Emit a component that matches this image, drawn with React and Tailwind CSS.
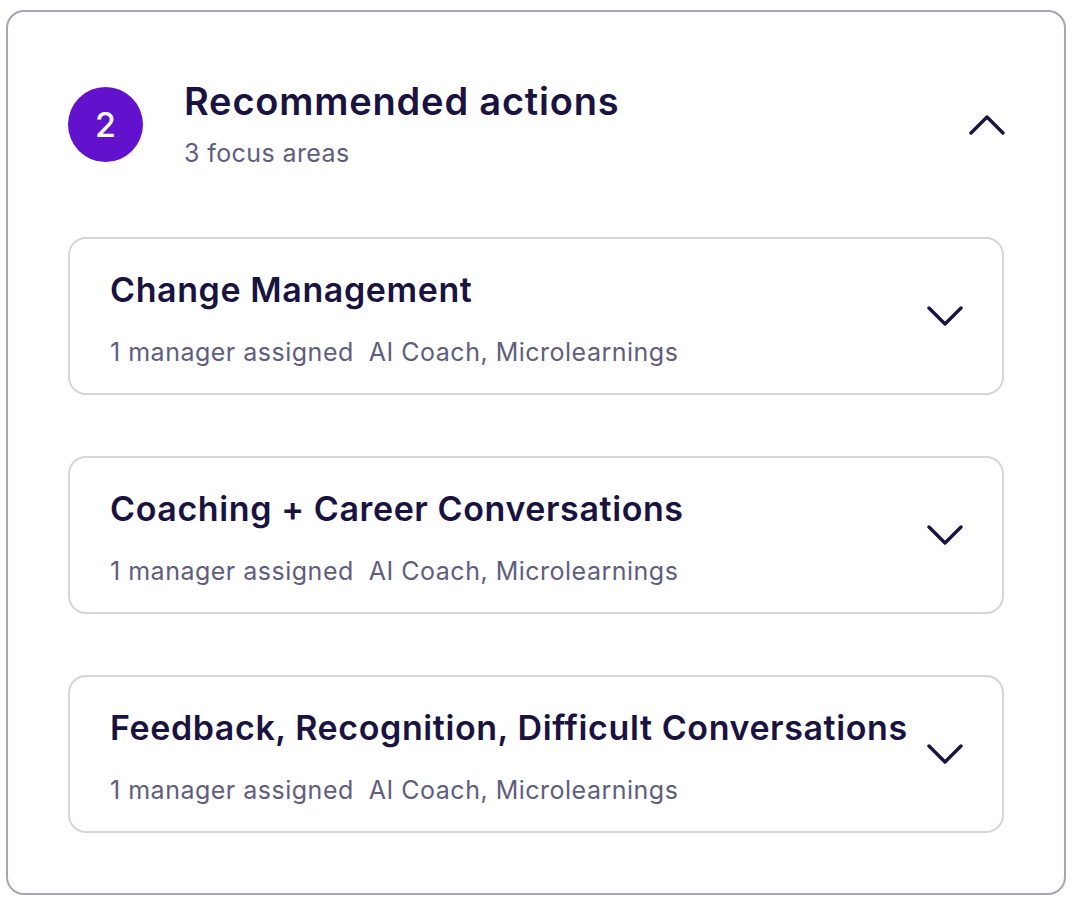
const areas = [
  { name: "Change Management", managers: "1 manager assigned", tools: "AI Coach, Microlearnings" },
  { name: "Coaching + Career Conversations", managers: "1 manager assigned", tools: "AI Coach, Microlearnings" },
  { name: "Feedback, Recognition, Difficult Conversations", managers: "1 manager assigned", tools: "AI Coach, Microlearnings" },
];

function Chevron({ up = false, className = "" }) {
  return (
    <svg
      viewBox="0 0 36 20"
      width="36"
      height="20"
      fill="none"
      stroke="currentColor"
      strokeWidth="3.4"
      strokeLinecap="round"
      strokeLinejoin="round"
      className={className}
    >
      {up ? <path d="M2 18 L18 2 L34 18" /> : <path d="M2 2 L18 18 L34 2" />}
    </svg>
  );
}

function FocusArea({ area }) {
  return (
    <div className="h-[158px] border-2 border-[#d6d5de] rounded-[18px] pl-10 pr-[39px] flex items-center justify-between">
      <div className="flex flex-col pt-[4px]">
        <span className="text-[34px] leading-[40px] font-semibold text-[#1a1340] tracking-[0.6px]">
          {area.name}
        </span>
        <span className="mt-[27px] text-[25px] leading-[30px] text-[#615d7e] tracking-[0.5px]">
          {area.managers}&nbsp; {area.tools}
        </span>
      </div>
      <Chevron className="text-[#1a1340] shrink-0" />
    </div>
  );
}

export default function App() {
  return (
    <div className="bg-white min-h-screen pt-[10px] pl-[6px]" style={{ fontFamily: "Inter, 'Noto Sans', sans-serif" }}>
      <div className="w-[1060px] border-2 border-[#a6a4b6] rounded-[18px] px-[60px] pt-[67px] pb-[60px]">
        <div className="flex items-start justify-between">
          <div className="flex items-start gap-[41px]">
            <div className="mt-[8px] w-[75px] h-[75px] rounded-full bg-[#6211cc] flex items-center justify-center text-white text-[34px] font-medium">
              2
            </div>
            <div className="flex flex-col">
              <span className="text-[38px] leading-[44px] font-semibold text-[#1a1340] tracking-[0.8px]">
                Recommended actions
              </span>
              <span className="mt-[15px] text-[25px] leading-[30px] text-[#615d7e] tracking-[0.4px]">3 focus areas</span>
            </div>
          </div>
          <Chevron up className="mt-[36px] -mr-[1px] text-[#1a1340]" />
        </div>
        <div className="mt-[69px] flex flex-col gap-[61px]">
          {areas.map((a) => (
            <FocusArea key={a.name} area={a} />
          ))}
        </div>
      </div>
    </div>
  );
}
